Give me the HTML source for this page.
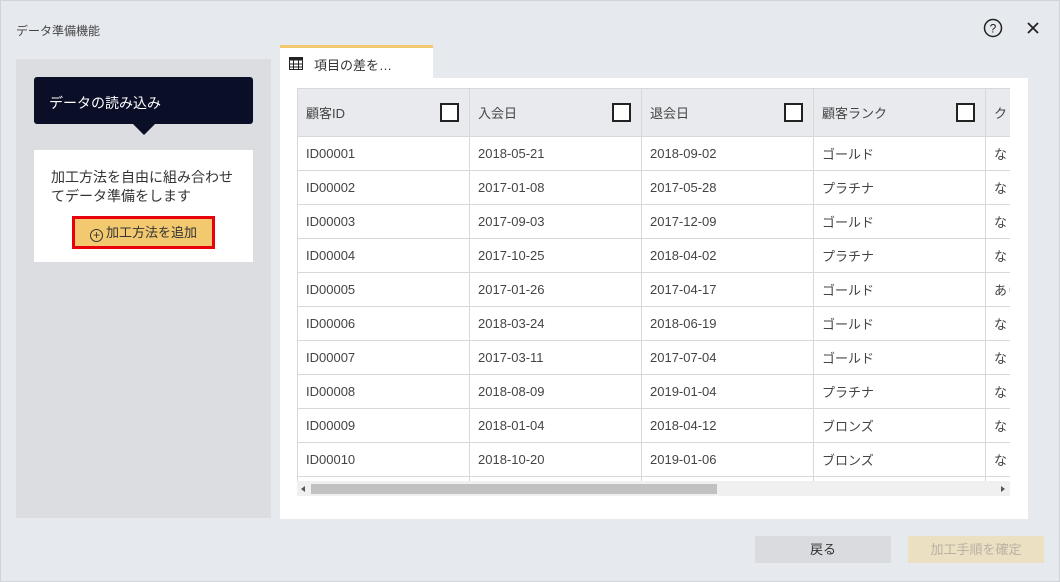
<!DOCTYPE html>
<html><head><meta charset="utf-8"><style>
*{margin:0;padding:0;box-sizing:border-box}
body{width:1060px;height:582px;background:#e6e9ee;font-family:"Liberation Sans","Noto Sans CJK JP",sans-serif;position:relative;overflow:hidden;color:#333}
.abs{position:absolute}
.frame{left:0;top:0;width:1060px;height:582px;border:1px solid #d0d3d8}
.title{left:16px;top:22px;font-size:12px;color:#444}
.left{left:16px;top:59px;width:255px;height:459px;background:#dcdde1}
.dark{left:34px;top:77px;width:219px;height:47px;background:#0a0e27;border-radius:3px;color:#fff;font-size:14px;padding:16px 0 0 15px}
.tri{left:133px;top:124px;width:0;height:0;border-left:11px solid transparent;border-right:11px solid transparent;border-top:11px solid #0a0e27}
.card{left:34px;top:150px;width:219px;height:112px;background:#fff;font-size:14px;line-height:19px;padding:18px 0 0 17px;color:#333}
.btn{left:72px;top:216px;width:143px;height:33px;background:#f3c96f;border:3px solid #e8000b;font-size:13px;text-align:center;line-height:27px;color:#333}
.tab{left:280px;top:45px;width:153px;height:34px;background:#fff;border-top:3px solid #f3c96f;font-size:13px;padding:7px 0 0 34px}
.panel{left:280px;top:78px;width:748px;height:441px;background:#fff}
.tbl{left:297px;top:88px;width:713px;height:393px;overflow:hidden}
table{border-collapse:collapse;font-size:13px;table-layout:fixed;width:860px}
td{width:172px;height:34px;border:1px solid #d6d8dc;border-top:none;padding-left:8px;color:#444;white-space:nowrap;overflow:hidden}
th{width:172px;height:48px;background:#e8eaee;border:1px solid #d6d8dc;text-align:left;padding-left:8px;font-weight:normal;color:#444;position:relative;white-space:nowrap}
.cb{position:absolute;right:10px;top:14px;width:19px;height:19px;border:2px solid #222;background:#fff}
.sb{left:297px;top:481px;width:713px;height:15px;background:#f0f0f0}
.thumb{left:311px;top:484px;width:406px;height:10px;background:#c1c1c1}
.b1{left:755px;top:536px;width:136px;height:27px;background:#d9dbdf;font-size:13px;text-align:center;line-height:27px;color:#333}
.b2{left:908px;top:536px;width:136px;height:27px;background:#ece0c2;font-size:13px;text-align:center;line-height:27px;color:#b8b2a4}
</style></head><body>
<div class="abs frame"></div>
<div class="abs title">データ準備機能</div>
<svg class="abs" style="left:983px;top:18px" width="20" height="20" viewBox="0 0 20 20"><circle cx="10" cy="10" r="8.5" fill="none" stroke="#222" stroke-width="1.5"/><text x="10" y="14.5" font-size="12" text-anchor="middle" font-family="Liberation Sans" fill="#222">?</text></svg>
<svg class="abs" style="left:1026px;top:21px" width="14" height="14" viewBox="0 0 14 14"><path d="M2 2L12 12M12 2L2 12" stroke="#222" stroke-width="1.8"/></svg>
<div class="abs left"></div>
<div class="abs dark">データの読み込み</div>
<div class="abs tri"></div>
<div class="abs card">加工方法を自由に組み合わせ<br>てデータ準備をします</div>
<div class="abs btn"><span style="display:inline-block;width:13px;height:13px;border:1.5px solid #333;border-radius:50%;font-size:12px;line-height:10px;vertical-align:-2px;margin-right:3px">+</span>加工方法を追加</div>
<div class="abs panel"></div>
<div class="abs tab">項目の差を…</div>
<svg class="abs" style="left:289px;top:57px" width="14" height="13" viewBox="0 0 14 13"><rect x="0.5" y="0.5" width="13" height="12" fill="none" stroke="#222"/><rect x="0.5" y="0.5" width="13" height="3" fill="#222"/><path d="M0 7H14M0 10H14M4.5 3V13M9.5 3V13" stroke="#222"/></svg>
<div class="abs tbl"><table>
<colgroup><col style="width:172px"><col style="width:172px"><col style="width:172px"><col style="width:172px"><col style="width:172px"></colgroup>
<tr><th>顧客ID<span class="cb"></span></th><th>入会日<span class="cb"></span></th><th>退会日<span class="cb"></span></th><th>顧客ランク<span class="cb"></span></th><th>クレ</th></tr>
<tr><td>ID00001</td><td>2018-05-21</td><td>2018-09-02</td><td>ゴールド</td><td>なし</td></tr>
<tr><td>ID00002</td><td>2017-01-08</td><td>2017-05-28</td><td>プラチナ</td><td>なし</td></tr>
<tr><td>ID00003</td><td>2017-09-03</td><td>2017-12-09</td><td>ゴールド</td><td>なし</td></tr>
<tr><td>ID00004</td><td>2017-10-25</td><td>2018-04-02</td><td>プラチナ</td><td>なし</td></tr>
<tr><td>ID00005</td><td>2017-01-26</td><td>2017-04-17</td><td>ゴールド</td><td>あり</td></tr>
<tr><td>ID00006</td><td>2018-03-24</td><td>2018-06-19</td><td>ゴールド</td><td>なし</td></tr>
<tr><td>ID00007</td><td>2017-03-11</td><td>2017-07-04</td><td>ゴールド</td><td>なし</td></tr>
<tr><td>ID00008</td><td>2018-08-09</td><td>2019-01-04</td><td>プラチナ</td><td>なし</td></tr>
<tr><td>ID00009</td><td>2018-01-04</td><td>2018-04-12</td><td>ブロンズ</td><td>なし</td></tr>
<tr><td>ID00010</td><td>2018-10-20</td><td>2019-01-06</td><td>ブロンズ</td><td>なし</td></tr>
<tr><td></td><td></td><td></td><td></td><td></td></tr>
</table></div>
<div class="abs sb"></div>
<div class="abs thumb"></div>
<div class="abs" style="left:301px;top:486px;border-right:4px solid #555;border-top:3px solid transparent;border-bottom:3px solid transparent"></div>
<div class="abs" style="left:1001px;top:486px;border-left:4px solid #555;border-top:3px solid transparent;border-bottom:3px solid transparent"></div>
<div class="abs b1">戻る</div>
<div class="abs b2">加工手順を確定</div>
</body></html>
